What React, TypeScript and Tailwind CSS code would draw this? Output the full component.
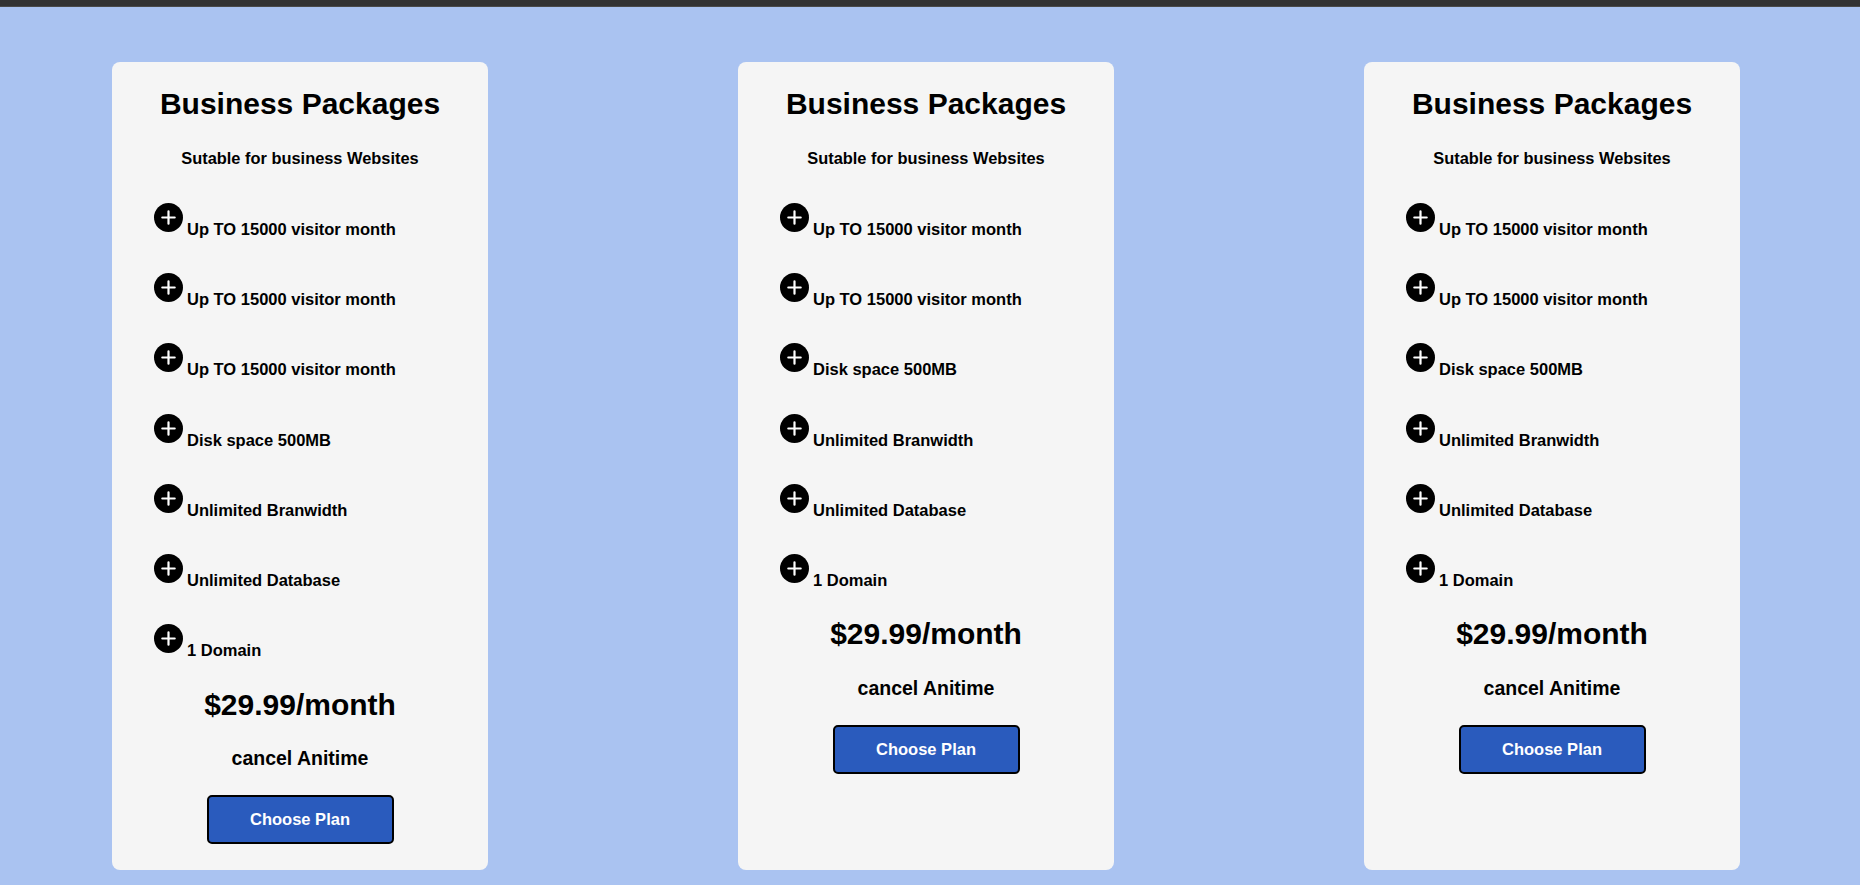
const plans = [
  {
    features: [
      "Up TO 15000 visitor month",
      "Up TO 15000 visitor month",
      "Up TO 15000 visitor month",
      "Disk space 500MB",
      "Unlimited Branwidth",
      "Unlimited Database",
      "1 Domain",
    ],
  },
  {
    features: [
      "Up TO 15000 visitor month",
      "Up TO 15000 visitor month",
      "Disk space 500MB",
      "Unlimited Branwidth",
      "Unlimited Database",
      "1 Domain",
    ],
  },
  {
    features: [
      "Up TO 15000 visitor month",
      "Up TO 15000 visitor month",
      "Disk space 500MB",
      "Unlimited Branwidth",
      "Unlimited Database",
      "1 Domain",
    ],
  },
];

const PlusIcon = () => (
  <svg width="29" height="29" viewBox="0 0 29 29" className="shrink-0">
    <circle cx="14.5" cy="14.5" r="14.5" fill="#000" />
    <path d="M14.5 8.3v12.4M8.3 14.5h12.4" stroke="#fff" strokeWidth="2.2" strokeLinecap="round" />
  </svg>
);

const PlanCard = ({ features }: { features: string[] }) => {
  return (
    <div className="w-[376px] bg-[#f5f5f5] rounded-lg pt-[25px] pb-[26px] flex flex-col">
      <h2 className="text-center text-[30px] leading-[34px] font-bold">Business Packages</h2>
      <p className="mt-[27px] text-center text-[16.4px] leading-[20px] font-bold">
        Sutable for business Websites
      </p>
      <div className="mt-[35px] pl-[42px] flex flex-col gap-[34.2px]">
        {features.map((f, i) => (
          <div key={i} className="flex items-start">
            <PlusIcon />
            <span className="mt-[16px] ml-[4px] text-[16.5px] leading-[20px] font-bold">{f}</span>
          </div>
        ))}
      </div>
      <div className="flex flex-col items-center">
        <p className="mt-[27.5px] text-[30px] leading-[34px] font-bold">$29.99/month</p>
        <p className="mt-[24.6px] text-[19.5px] leading-[24px] font-bold">cancel Anitime</p>
        <button className="mt-[24.5px] w-[187px] h-[49px] bg-[#2a5bbd] border-2 border-black rounded-[5px] text-white text-[16.5px] font-bold">
          Choose Plan
        </button>
      </div>
    </div>
  );
};

export default function App() {
  return (
    <div className="min-h-screen bg-[#aac3f1] text-black font-['Liberation_Sans',Arial,sans-serif]">
      <div className="h-[7px] bg-[#333333] border-b border-[#4a4a4a]" />
      <div className="flex items-stretch gap-[250px] pl-[112px] pr-[119px] pt-[55px] pb-[15px]">
        {plans.map((p, i) => (
          <PlanCard key={i} features={p.features} />
        ))}
      </div>
    </div>
  );
}
